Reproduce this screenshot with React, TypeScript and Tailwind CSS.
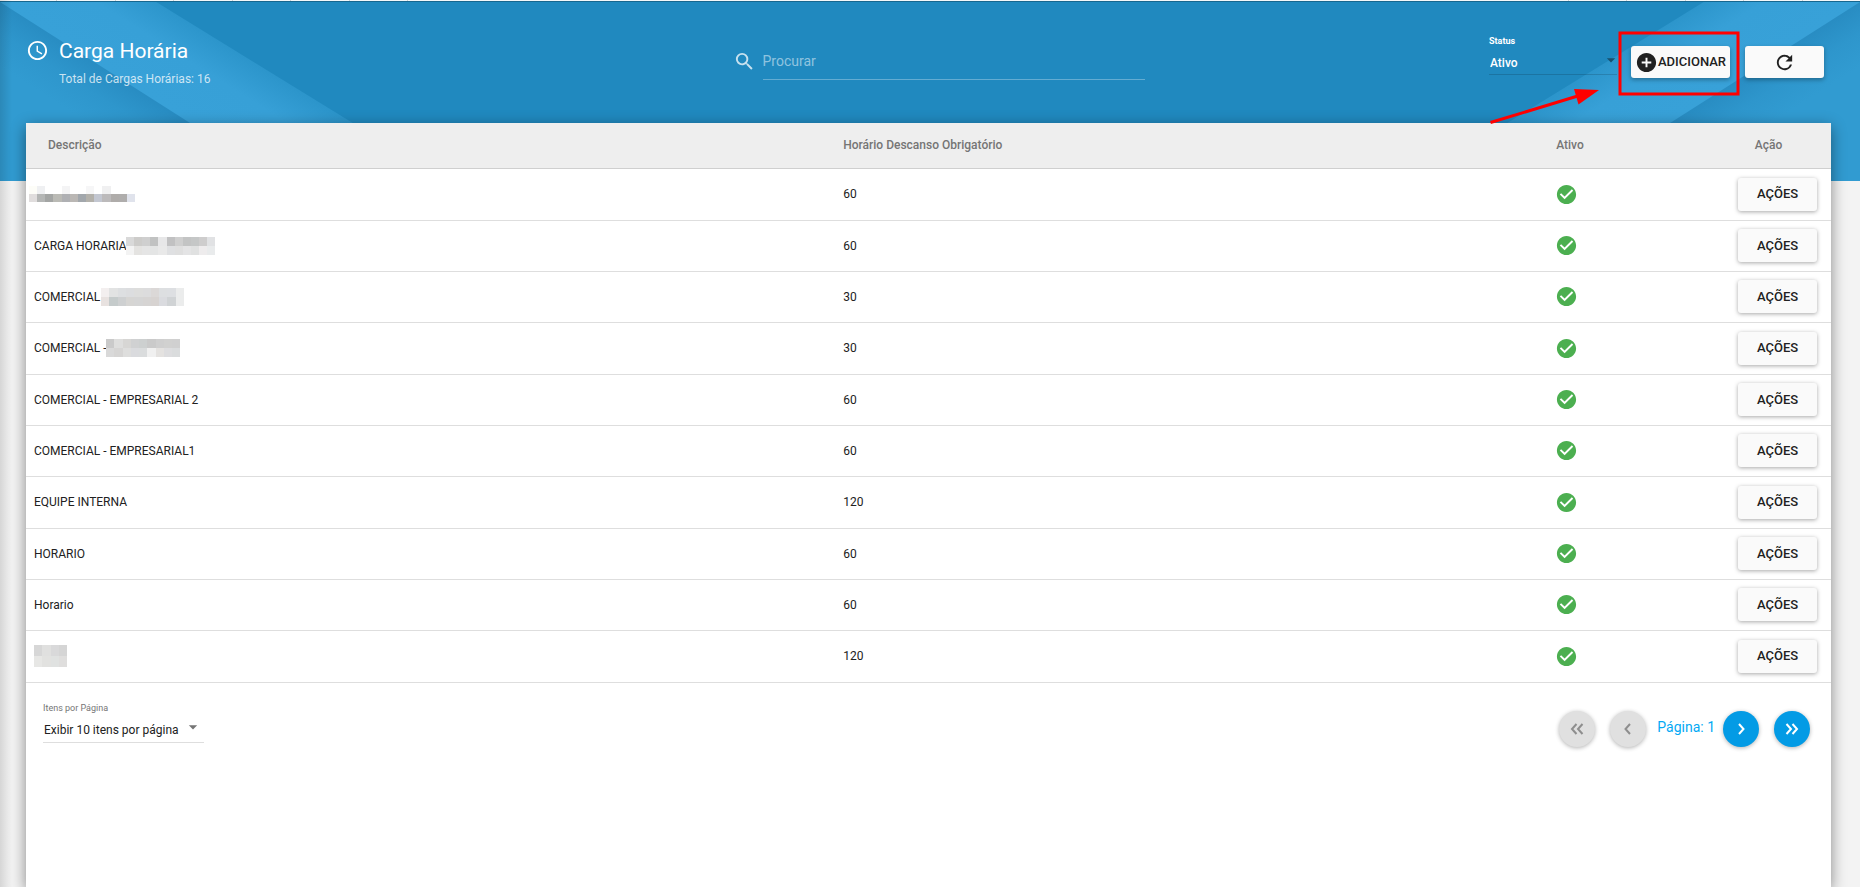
import React, { useState } from "react";
import {
  MdAccessTime,
  MdAddCircle,
  MdArrowDropDown,
  MdCheckCircle,
  MdRefresh,
  MdSearch,
} from "react-icons/md";

interface Mask {
  className: string;
  cellWidth: number;
  cellHeight: number;
  rows: string[][];
}

interface Schedule {
  id: number;
  name: string;
  rest: number;
  mask?: Mask;
}

const schedules: Schedule[] = [
  {
    id: 1,
    name: "",
    rest: 60,
    mask: {
      className: "-ml-[5px]",
      cellWidth: 8.15,
      cellHeight: 8,
      rows: [
        ["#fdfdf8", "#eff0f2", "#fff", "#fff", "#f4f4f5", "#fff", "#fff", "#f6f6f7", "#fff", "#f0f0f1", "#fff", "#fff", "#fff"],
        ["#e0dddd", "#b4b6b5", "#a3a5a4", "#babab5", "#afb0b3", "#bab7b4", "#a2a7ac", "#b3b1ab", "#c3c7d1", "#bcbabb", "#afacaa", "#afadac", "#e0e3ec"],
      ],
    },
  },
  {
    id: 2,
    name: "CARGA HORARIA",
    rest: 60,
    mask: {
      className: "-ml-px",
      cellWidth: 8.1,
      cellHeight: 9,
      rows: [
        ["#d9d9d9", "#cdccca", "#cfcfcf", "#c1c2c2", "#e7e7e8", "#c1c1c2", "#cfcfcf", "#c3c4c4", "#c5c7c7", "#cecdcd", "#e1e2e4"],
        ["#f3f3f3", "#e4e3e1", "#e5e5e5", "#e4e5e5", "#e9e9e9", "#dfe0e2", "#dfdfdf", "#e4e4e5", "#e0e1e1", "#eeeced", "#e9ebec"],
      ],
    },
  },
  {
    id: 3,
    name: "COMERCIAL",
    rest: 30,
    mask: {
      className: "ml-px",
      cellWidth: 8.3,
      cellHeight: 9,
      rows: [
        ["#f3efef", "#e2e3e3", "#dddfe1", "#dcdddf", "#dddddc", "#dcdcdd", "#dbd8d7", "#dddfe1", "#dddfe2", "#ebecec"],
        ["#e8e2e0", "#c5cbcb", "#ced0d1", "#d6d5d3", "#d5d5d5", "#d6d4d3", "#d7d3d1", "#dadbdf", "#d0d3d5", "#ebecec"],
      ],
    },
  },
  {
    id: 4,
    name: "COMERCIAL -",
    rest: 30,
    mask: {
      className: "-ml-px",
      cellWidth: 8.25,
      cellHeight: 9,
      rows: [
        ["#cacaca", "#dededd", "#d7d6d4", "#d0d1d2", "#cdd0d0", "#cacaca", "#cfcfcf", "#d1d1d0", "#d0d0d0"],
        ["#d9d9d9", "#d6d5d4", "#dededd", "#dadbde", "#dadcdd", "#f0f0f0", "#e4e2e0", "#dddddf", "#dadcdd"],
      ],
    },
  },
  { id: 5, name: "COMERCIAL - EMPRESARIAL 2", rest: 60 },
  { id: 6, name: "COMERCIAL - EMPRESARIAL1", rest: 60 },
  { id: 7, name: "EQUIPE INTERNA", rest: 120 },
  { id: 8, name: "HORARIO", rest: 60 },
  { id: 9, name: "Horario", rest: 60 },
  {
    id: 10,
    name: "",
    rest: 120,
    mask: {
      className: "",
      cellWidth: 8.25,
      cellHeight: 11,
      rows: [
        ["#d7d7d7", "#e0e0df", "#d9d9da", "#d5d5d5"],
        ["#e7e7e5", "#e2e2e0", "#e0e2e1", "#dfdedd"],
      ],
    },
  },
];

// Mosaic that hides the private part of a name
const MaskedText: React.FC<{ mask: Mask }> = ({ mask }) => (
  <svg
    aria-hidden="true"
    className={`shrink-0 ${mask.className}`}
    width={mask.rows[0].length * mask.cellWidth}
    height={mask.rows.length * mask.cellHeight}
    shapeRendering="crispEdges"
  >
    {mask.rows.map((row, y) =>
      row.map((color, x) => (
        <rect
          key={`${x}-${y}`}
          x={x * mask.cellWidth}
          y={y * mask.cellHeight}
          width={mask.cellWidth}
          height={mask.cellHeight}
          fill={color}
        />
      ))
    )}
  </svg>
);

const HeaderBackground: React.FC = () => (
  <svg
    aria-hidden="true"
    className="absolute inset-0 h-full w-full"
    viewBox="0 0 1860 181"
    preserveAspectRatio="none"
  >
    <defs>
      <linearGradient id="band" gradientUnits="userSpaceOnUse" x1="93" y1="60" x2="138" y2="-11">
        <stop offset="0" stopColor="#38a1d8" />
        <stop offset="0.6" stopColor="#37a0d7" />
        <stop offset="1" stopColor="#2c95cb" />
      </linearGradient>
      <linearGradient id="corner" gradientUnits="userSpaceOnUse" x1="95" y1="61" x2="65" y2="108">
        <stop offset="0" stopColor="#288cc2" />
        <stop offset="0.5" stopColor="#2e96cc" />
        <stop offset="1" stopColor="#319bd1" />
      </linearGradient>
      <g id="ray">
        <polygon points="0,0 153,0 447,181 0,181" fill="url(#band)" />
        <polygon points="0,2 281,181 0,181" fill="url(#corner)" />
      </g>
    </defs>
    <rect width="1860" height="181" fill="#2089bf" />
    <use href="#ray" />
    <use href="#ray" transform="translate(1860 0) scale(-1 1)" />
    {/* Light edge with the tick marks of the bar above */}
    <rect width="1860" height="1" fill="#f4f7f9" />
    <rect y="1" width="1860" height="1" fill="#17678f" />
    {[56, 115, 173, 232, 290, 349, 407, 1568, 1626, 1685, 1743, 1802].map((x) => (
      <rect key={x} x={x} width="1" height="1" fill="#cdd2d5" />
    ))}
  </svg>
);

const PageButton: React.FC<{
  label: string;
  path: string;
  disabled?: boolean;
  onClick?: () => void;
}> = ({ label, path, disabled, onClick }) => (
  <button
    type="button"
    aria-label={label}
    disabled={disabled}
    onClick={onClick}
    className="flex size-9 items-center justify-center rounded-full bg-[#039be5] text-white shadow-[0_1px_4px_rgba(0,0,0,0.3)] disabled:bg-[#e0e0e0] disabled:text-[#8e8e8e]"
  >
    <svg width="18" height="18" viewBox="0 0 18 18" fill="none" stroke="currentColor" strokeWidth="2">
      <path d={path} />
    </svg>
  </button>
);

const App: React.FC = () => {
  const [search, setSearch] = useState("");
  const [page, setPage] = useState(1);

  return (
    <div className="relative flex min-h-screen flex-col bg-[#f3f3f3] font-[Roboto,sans-serif] text-xs text-[#212121]">
      <div className="absolute inset-x-0 top-0 h-[181px]">
        <HeaderBackground />
      </div>
      <div className="absolute inset-y-0 left-0 w-3 bg-linear-to-r from-black/12 to-transparent" />

      <header className="relative flex h-[123px] items-start justify-between pr-9 pl-[26px]">
        <div className="flex w-[362px] gap-2.5 pt-9">
          <MdAccessTime className="mt-[3px] size-[23px] shrink-0 text-white" />
          <div>
            <h1 className="text-[21px] leading-[30px] text-white">Carga Horária</h1>
            <p className="leading-[26px] text-white/75">Total de Cargas Horárias: 16</p>
          </div>
        </div>

        <div className="flex items-center gap-[7px] pt-[42px]">
          <MdSearch className="size-[23px] text-white/75" />
          <input
            type="text"
            aria-label="Procurar"
            placeholder="Procurar"
            value={search}
            onChange={(e) => setSearch(e.target.value)}
            className="h-[38px] w-[382px] border-b border-white/30 text-sm text-white outline-none placeholder:text-white/50"
          />
        </div>

        <div className="flex items-start">
          <div className="mr-[14px] w-32 pt-[34px]">
            <label htmlFor="status" className="block text-[9px] leading-[14px] font-bold text-white">
              Status
            </label>
            <div className="relative">
              <select
                id="status"
                className="h-[27px] w-full appearance-none border-b border-black/15 pt-[3px] pl-px font-medium text-white outline-none"
              >
                <option>Ativo</option>
              </select>
              <MdArrowDropDown className="pointer-events-none absolute top-0.5 -right-1 size-5 text-[#17516f]" />
            </div>
          </div>
          <div className="flex gap-[15px] pt-[46px]">
            <button
              type="button"
              className="flex h-8 w-[99px] items-center justify-center rounded-[3px] bg-[#fafafa] text-[13px] font-medium shadow-[0_2px_4px_rgba(0,0,0,0.3)]"
            >
              <MdAddCircle className="size-[23px] shrink-0" />
              ADICIONAR
            </button>
            <button
              type="button"
              aria-label="Atualizar"
              className="flex h-8 w-[79px] items-center justify-center rounded-[3px] bg-[#fafafa] shadow-[0_2px_4px_rgba(0,0,0,0.3)]"
            >
              <MdRefresh className="size-[23px]" />
            </button>
          </div>
        </div>
      </header>

      <main className="relative mr-[29px] ml-[26px] flex-1 bg-white shadow-[0_4px_14px_rgba(0,0,0,0.45)]">
        <table className="w-full table-fixed border-collapse text-left">
          <thead>
            <tr className="h-[45px] border-b border-[#cfcfcf] bg-[#eee] text-[#757575]">
              <th className="w-[45%] pl-[22px] font-medium">Descrição</th>
              <th className="w-[39%] pl-[5px] font-medium">Horário Descanso Obrigatório</th>
              <th className="pl-[14px] font-medium">Ativo</th>
              <th className="w-[125px] text-center font-medium">Ação</th>
            </tr>
          </thead>
          <tbody>
            {schedules.map((item) => (
              <tr key={item.id} className="h-[51px] border-b border-[#dedede] nth-[3n+1]:h-[52px]">
                <td className="pl-2">
                  <div className="flex items-center">
                    {item.name}
                    {item.mask && <MaskedText mask={item.mask} />}
                  </div>
                </td>
                <td className="pl-[5px]">{item.rest}</td>
                <td className="pl-[13px]">
                  <MdCheckCircle className="size-[23px] text-[#4caf50]" />
                </td>
                <td className="pr-[14px]">
                  <button
                    type="button"
                    className="ml-auto block h-[33px] w-[79px] rounded-[3px] bg-[#fafafa] text-[13px] font-medium shadow-[0_1px_4px_rgba(0,0,0,0.35)]"
                  >
                    AÇÕES
                  </button>
                </td>
              </tr>
            ))}
          </tbody>
        </table>

        <footer className="flex items-start justify-between pr-[21px] pl-[17px]">
          <div className="w-[161px] pt-[18px]">
            <label htmlFor="per-page" className="block text-[9px] leading-[14px] text-[#757575]">
              Itens por Página
            </label>
            <div className="relative">
              <select
                id="per-page"
                className="h-7 w-full appearance-none border-b border-[#dedede] pt-[3px] pl-px outline-none"
              >
                <option>Exibir 10 itens por página</option>
              </select>
              <MdArrowDropDown className="pointer-events-none absolute top-0.5 right-px size-5 text-[#757575]" />
            </div>
          </div>
          <nav aria-label="Paginação" className="flex items-center pt-7">
            <div className="flex gap-[15px]">
              <PageButton label="Primeira página" path="M8.5 4 4 9l4.5 5M14.5 4 10 9l4.5 5" disabled />
              <PageButton label="Página anterior" path="M11 4 6.500 9l4.500 5" disabled />
            </div>
            <span className="mr-2 ml-[11px] pb-1 text-sm text-[#03a9f4]">Página: {page}</span>
            <div className="flex gap-[15px]">
              <PageButton label="Próxima página" path="M7 4l4.500 5L7 14" onClick={() => setPage(page + 1)} />
              <PageButton label="Última página" path="M3.500 4 8 9l-4.500 5M9.500 4 14 9l-4.500 5" onClick={() => setPage(2)} />
            </div>
          </nav>
        </footer>
      </main>

      {/* Callout that points at the add button */}
      <svg
        aria-hidden="true"
        className="pointer-events-none absolute top-[30px] right-[119px]"
        width="252"
        height="96"
        fill="none"
        stroke="#f00"
      >
        <rect x="131" y="3" width="118" height="61" strokeWidth="3" />
        <path d="M1.500 92.500 92 65" strokeWidth="3" />
        <path d="M85 59l25 1-20.500 14.500z" fill="#f00" stroke="none" />
      </svg>
    </div>
  );
};

export default App;
